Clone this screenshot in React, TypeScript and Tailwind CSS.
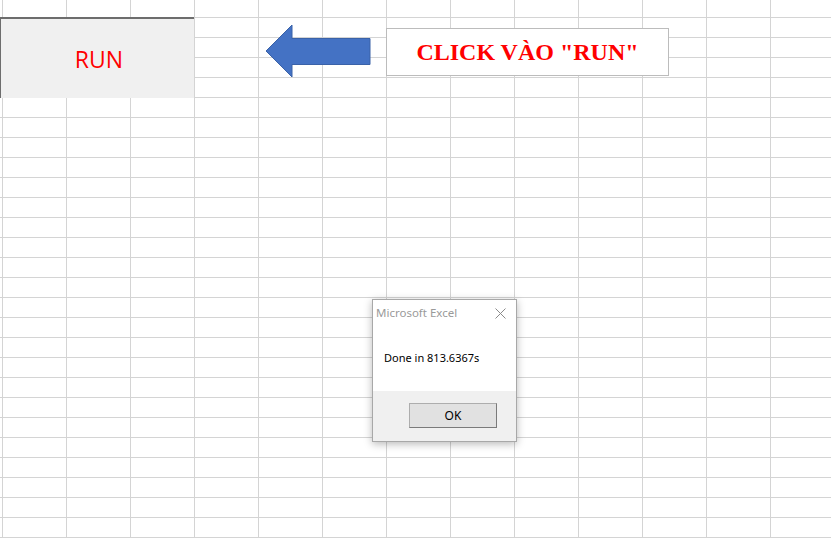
import React from "react";

const COLS = 14;
const ROWS = 28;

export default function App() {
  const cells = [];
  for (let r = 0; r < ROWS; r++) {
    for (let c = 0; c < COLS; c++) {
      cells.push(
        <div key={`${r}-${c}`} className="border-r border-b border-[#d4d4d4]" />
      );
    }
  }
  return (
    <div className="relative w-[831px] h-[538px] overflow-hidden bg-white">
      <div className="grid grid-cols-[3px_repeat(13,64px)] grid-rows-[18px_repeat(27,20px)]">
        {cells}
      </div>

      {/* RUN button */}
      <div className="absolute left-0 top-[17px] w-[194px] h-[81px] bg-[#f0f0f0] border-t-2 border-l border-[#6d6d6d] flex items-center justify-center">
        <span
          className="text-[23px] text-[#ff0000] leading-none pl-[3px] pt-[2px]"
          style={{ fontFamily: '"Open Sans", sans-serif' }}
        >
          RUN
        </span>
      </div>

      {/* Arrow */}
      <svg
        className="absolute left-0 top-0"
        width="400"
        height="100"
        viewBox="0 0 400 100"
      >
        <polygon
          points="266,51 292,25 292,38.5 370,38.5 370,64.5 292,64.5 292,77"
          fill="#4472c4"
          stroke="#3a62a8"
          strokeWidth="1"
        />
      </svg>

      {/* Label box */}
      <div className="absolute left-[386px] top-[28px] w-[283px] h-[48px] bg-white border border-[#bcbcbc] flex items-center justify-center">
        <span
          className="text-[24px] font-bold text-[#ff0000] leading-none"
          style={{ fontFamily: '"Liberation Serif", serif' }}
        >
          CLICK VÀO "RUN"
        </span>
      </div>

      {/* Dialog */}
      <div
        className="absolute left-[372px] top-[299px] w-[145px] h-[143px] bg-white border border-[#a8a8a8] shadow-[0_2px_8px_rgba(0,0,0,0.28)] flex flex-col"
        style={{ fontFamily: '"Noto Sans", sans-serif' }}
      >
        <div className="h-[26px] flex items-center justify-between pl-[3px] pr-[10px]">
          <span className="text-[11.5px] text-[#9a9a9a]">Microsoft Excel</span>
          <svg width="11" height="11" viewBox="0 0 11 11">
            <path d="M0.5 0.5 L10.5 10.5 M10.5 0.5 L0.5 10.5" stroke="#8a8a8a" strokeWidth="1" />
          </svg>
        </div>
        <div className="flex-1 bg-white pl-[11px] pt-[26px]">
          <div className="text-[11px] text-black leading-none">Done in 813.6367s</div>
        </div>
        <div className="h-[50px] bg-[#f0f0f0] flex justify-end pr-[19px] pt-[12px]">
          <div className="w-[88px] h-[25px] bg-[#e1e1e1] border border-[#adadad] border-r-[#7a7a7a] border-b-[#7a7a7a] flex items-center justify-center">
            <span className="text-[12px] text-black leading-none">OK</span>
          </div>
        </div>
      </div>
    </div>
  );
}
